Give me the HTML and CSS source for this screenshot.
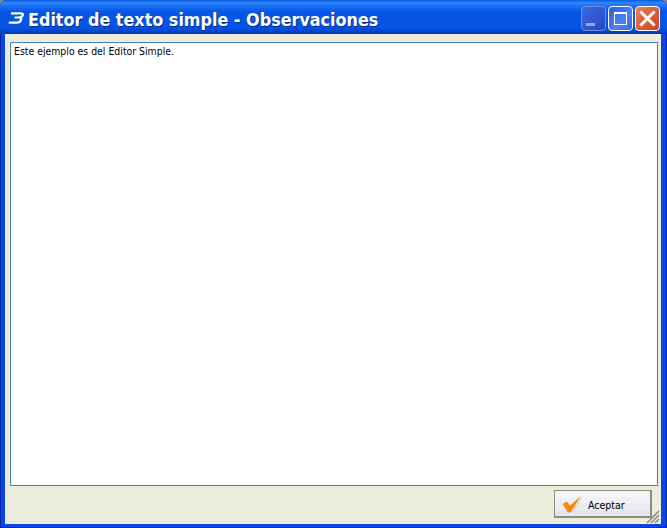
FILE: index.html
```html
<!DOCTYPE html>
<html lang="es">
<head>
<meta charset="utf-8">
<title>Editor de texto simple</title>
<link rel="stylesheet" href="styles.css">
</head>
<body>
<div class="window">
  <header class="titlebar">
    <svg class="app-icon" width="16" height="12" viewBox="0 0 16 12"><path d="M3 1.3H12.5Q15.5 1.3 14.8 3.2Q14 5.5 11 5.5H6.5M11 5.5Q13.8 6 13 8Q12 10.6 9 10.6H0.8" fill="none" stroke="#fff" stroke-width="2.2"/></svg>
    <h1 class="title">Editor de texto simple - Observaciones</h1>
    <div class="controls">
      <div class="ctl ctl-min"><span class="min-glyph"></span></div>
      <div class="ctl ctl-max"><span class="max-glyph"></span></div>
      <div class="ctl ctl-close">
        <svg width="17" height="17" viewBox="0 0 17 17"><path d="M2.5 2.5L14.5 14.5M14.5 2.5L2.5 14.5" stroke="#fff" stroke-width="3" stroke-linecap="square"/></svg>
      </div>
    </div>
  </header>
  <main class="client">
    <div class="editor">Este ejemplo es del Editor Simple.</div>
    <footer class="actions">
      <button class="btn" type="button">
        <svg class="check" width="24" height="20" viewBox="0 0 24 20"><path d="M10 18L23 0L13 18Z" fill="#d6d6d6"/><path d="M1.5 10L6 7.5L9 11.5L20 2L9.5 18.5H7Z" fill="#f58a0c"/></svg>
        <span class="btn-label">Aceptar</span>
      </button>
      <svg class="grip" width="14" height="14" viewBox="0 0 14 14"><path d="M13 1L1 13M13 5L5 13M13 9L9 13" stroke="#8f8c7c" stroke-width="1.6"/></svg>
    </footer>
  </main>
</div>
</body>
</html>
```
FILE: styles.css
```css
html, body { margin: 0; padding: 0; background: #7f8a9a; }
.window {
  width: 667px; height: 528px; box-sizing: border-box;
  display: flex; flex-direction: column;
  background: #0a45e6; border-radius: 7px 7px 0 0; overflow: hidden;
  padding: 0 6px 4px 5px;
  box-shadow: inset -1px -1px 0 #0028a8, inset 1px 0 0 #0028a8;
}
.titlebar {
  height: 34px; flex: none; margin: 0 -6px 0 -5px; padding: 0 7px 0 8px;
  display: flex; align-items: center;
  background: linear-gradient(#0a5ae4 0, #2f88fb 3px, #1a6ef2 6px, #0656e6 12px, #0555e4 26px, #0350e0 29px, #0240c8 32px, #0138b0 34px);
}
.app-icon { flex: none; margin-right: 4px; margin-top: 2px; }
.title {
  margin: 5px 0 0; flex: 1; color: #fff;
  font: bold 17.8px "DejaVu Sans Condensed", "DejaVu Sans", sans-serif; text-shadow: 1px 1px 0 #0a2a90;
  white-space: nowrap;
}
.controls { display: flex; gap: 2px; margin-top: 3px; }
.ctl {
  width: 25px; height: 25px; box-sizing: border-box; border: 1px solid #fff; border-radius: 4px;
  display: flex; align-items: center; justify-content: center; position: relative;
}
.ctl-min { background: linear-gradient(135deg, #3f68e0, #2448c4); border-color: #6f8fe8; }
.ctl-max { background: linear-gradient(135deg, #2c5ad8, #4f82f8 60%, #3a64e0); }
.ctl-close { background: linear-gradient(135deg, #ea7d5c, #d0401c); }
.min-glyph { position: absolute; left: 4px; bottom: 4px; width: 9px; height: 3px; background: #8fa8e8; }
.max-glyph { width: 13px; height: 13px; box-sizing: border-box; border: 1px solid #fff; border-top-width: 2px; }
.client {
  flex: 1; min-height: 0; background: #ecedda;
  display: flex; flex-direction: column; padding: 8px 3px 0 5px;
}
.editor {
  height: 444px; flex: none; box-sizing: border-box; background: #fff;
  border: 1px solid #4a7cc8; padding: 2px 3px;
  font: 10.4px "DejaVu Sans Condensed", "DejaVu Sans", sans-serif; color: #000;
}
.actions { flex: 1; display: flex; justify-content: flex-end; position: relative; padding: 4px 6px 0 0; }
.btn {
  width: 98px; height: 28px; padding: 0 0 0 6px; box-sizing: border-box;
  border: 1px solid #8c8c84; border-right: 2px solid #8c8c84; border-bottom: 2px solid #8c8c84;
  background: linear-gradient(#f6f6f6 0, #f6f6f6 6px, #f0f0f6 7px, #f0f0f6 12px, #ebebf2 13px, #ebebf2 19px, #e2e2ea 20px, #eaeaee 26px);
  display: flex; align-items: center; gap: 0; cursor: pointer;
  font: 10.5px "DejaVu Sans Condensed", "DejaVu Sans", sans-serif; color: #000;
}
.check { flex: none; }
.btn-label { margin: 2px 0 0 3px; }
.grip { position: absolute; right: -2px; bottom: 0; }
```
